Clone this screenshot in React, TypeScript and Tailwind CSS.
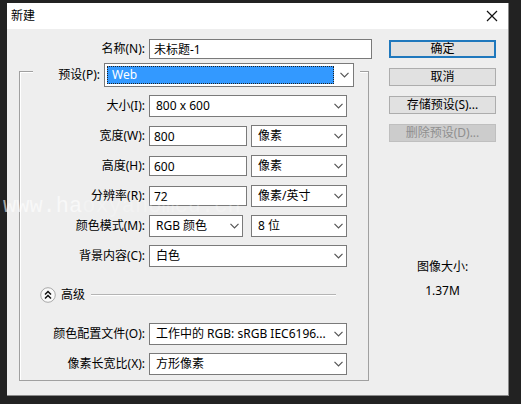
import React from "react";
import clsx from "clsx";

function Chevron({ className }: { className?: string }) {
  return (
    <svg viewBox="0 0 9 6" className={clsx("pointer-events-none h-[6px] w-[9px]", className)} fill="none" stroke="#555" strokeWidth="1.2">
      <path d="M0.5 0.8 4.5 4.8 8.5 0.8" />
    </svg>
  );
}

function Select({ id, label, options, className }: { id: string; label?: string; options: string[]; className?: string }) {
  return (
    <div className={clsx("relative", className)}>
      <select
        id={id}
        aria-label={label}
        className="block h-[22px] w-full appearance-none border border-[#7a7a7a] bg-white pr-4 pl-[6px] outline-none"
      >
        {options.map((option) => (
          <option key={option}>{option}</option>
        ))}
      </select>
      <Chevron className="absolute top-2 right-1" />
    </div>
  );
}

function TextInput({ id, value }: { id: string; value: string }) {
  return (
    <input
      id={id}
      type="text"
      defaultValue={value}
      className="block h-5 w-full min-w-0 border border-[#7a7a7a] bg-white px-1 outline-none"
    />
  );
}

function Row({ id, label, children }: { id: string; label: string; children: React.ReactNode }) {
  return (
    <div className="flex items-center gap-1">
      <label htmlFor={id} className="w-[125px] shrink-0 text-right whitespace-nowrap">
        {label}
      </label>
      <div className="min-w-0 flex-1">{children}</div>
    </div>
  );
}

function Pair({ children }: { children: React.ReactNode }) {
  return <div className="grid grid-cols-[98px_1fr] items-center gap-1">{children}</div>;
}

function ActionButton({ children, primary, disabled }: { children: React.ReactNode; primary?: boolean; disabled?: boolean }) {
  return (
    <button
      type="button"
      disabled={disabled}
      className={clsx(
        "flex h-[18px] w-full items-center justify-center whitespace-nowrap",
        primary && "border-2 border-[#1f78bd] bg-[#e1e1e1]",
        disabled && "border border-[#bfbfbf] bg-[#cccccc] text-[#8f8f8f]",
        !primary && !disabled && "border border-[#adadad] bg-[#e1e1e1]"
      )}
    >
      {children}
    </button>
  );
}

export default function App() {
  return (
    <main className="min-h-screen bg-[#222222] pt-[3px] pr-3 pb-2 pl-[7px] font-['Noto_Sans','Noto_Sans_CJK_SC',sans-serif] text-[12px] leading-4 text-black">
      <div role="dialog" aria-label="新建" className="relative border-r border-b border-[#8a8a8a] bg-[#eeeeee]">
        <header className="flex h-[26px] items-center justify-between bg-white pr-[10px] pl-1">
          <h1>新建</h1>
          <button type="button" aria-label="关闭">
            <svg viewBox="0 0 12 12" className="h-3 w-3" stroke="#111" strokeWidth="1.2">
              <path d="M1 1 11 11M11 1 1 11" />
            </svg>
          </button>
        </header>

        <form className="flex gap-[17px] pt-[10px] pr-3 pb-[14px] pl-3">
          <div className="min-w-0 flex-1">
            <div className="pl-px">
              <Row id="name" label="名称(N):">
                <TextInput id="name" value="未标题-1" />
              </Row>
            </div>

            <div className="mt-3 mr-[3px] border border-[#a0a0a0] pb-[5px] shadow-[inset_1px_1px_0_#fff]">
              <div className="-mt-[9px] mr-2 ml-[13px] flex items-center gap-1 bg-[#eeeeee] pr-[6px]">
                <label htmlFor="preset" className="w-[67px] shrink-0 text-right">
                  预设(P):
                </label>
                <div className="flex h-6 flex-1 items-center border border-[#7a7a7a] bg-white p-[2px]">
                  <select
                    id="preset"
                    className="h-full min-w-0 flex-1 appearance-none border border-dotted border-[#222] bg-[#3399ff] pl-1 text-white outline-none"
                  >
                    <option>Web</option>
                  </select>
                  <Chevron className="mr-[2px] ml-[6px]" />
                </div>
              </div>

              <div className="mt-2 space-y-2 pr-[21px]">
                <Row id="size" label="大小(I):">
                  <Select id="size" options={["800 x 600"]} />
                </Row>
                <Row id="width" label="宽度(W):">
                  <Pair>
                    <TextInput id="width" value="800" />
                    <Select id="width-unit" label="宽度单位" options={["像素"]} />
                  </Pair>
                </Row>
                <Row id="height" label="高度(H):">
                  <Pair>
                    <TextInput id="height" value="600" />
                    <Select id="height-unit" label="高度单位" options={["像素"]} />
                  </Pair>
                </Row>
                <Row id="resolution" label="分辨率(R):">
                  <Pair>
                    <TextInput id="resolution" value="72" />
                    <Select id="resolution-unit" label="分辨率单位" options={["像素/英寸"]} />
                  </Pair>
                </Row>
                <Row id="mode" label="颜色模式(M):">
                  <Pair>
                    <Select id="mode" options={["RGB 颜色"]} className="mr-1" />
                    <Select id="depth" label="位深度" options={["8 位"]} />
                  </Pair>
                </Row>
                <Row id="background" label="背景内容(C):">
                  <Select id="background" options={["白色"]} />
                </Row>
              </div>

              <div className="my-4 flex h-6 items-center pr-8 pl-5">
                <button type="button" aria-expanded="true" className="flex items-center gap-[5px]">
                  <svg viewBox="0 0 16 16" className="h-4 w-4" fill="none">
                    <circle cx="8" cy="8" r="7.3" fill="#fafafa" stroke="#a8a8a8" />
                    <path d="M5 7.5 8 4.5 11 7.5M5 11.5 8 8.5 11 11.5" stroke="#111" strokeWidth="1.5" />
                  </svg>
                  高级
                </button>
                <div className="ml-[6px] h-[2px] flex-1 border-t border-[#b4b4b4] bg-white" />
              </div>

              <div className="space-y-2 pr-[21px]">
                <Row id="profile" label="颜色配置文件(O):">
                  <Select id="profile" options={["工作中的 RGB: sRGB IEC6196..."]} />
                </Row>
                <Row id="aspect" label="像素长宽比(X):">
                  <Select id="aspect" options={["方形像素"]} />
                </Row>
              </div>
            </div>
          </div>

          <aside className="w-[107px] shrink-0">
            <div className="space-y-[10px] pt-px">
              <ActionButton primary>确定</ActionButton>
              <ActionButton>取消</ActionButton>
              <ActionButton>存储预设(S)...</ActionButton>
              <ActionButton disabled>删除预设(D)...</ActionButton>
            </div>
            <div className="mt-[117px] space-y-2 text-center">
              <p>图像大小:</p>
              <p>1.37M</p>
            </div>
          </aside>
        </form>

        {/* faint site mark across the form */}
        <p className="pointer-events-none absolute top-[196px] -left-1 font-['Liberation_Mono',monospace] text-[22px] leading-4 whitespace-nowrap text-white/60">
          www.ha<span className="text-white/25">oxyanomcu.cn</span>
        </p>
      </div>
    </main>
  );
}
